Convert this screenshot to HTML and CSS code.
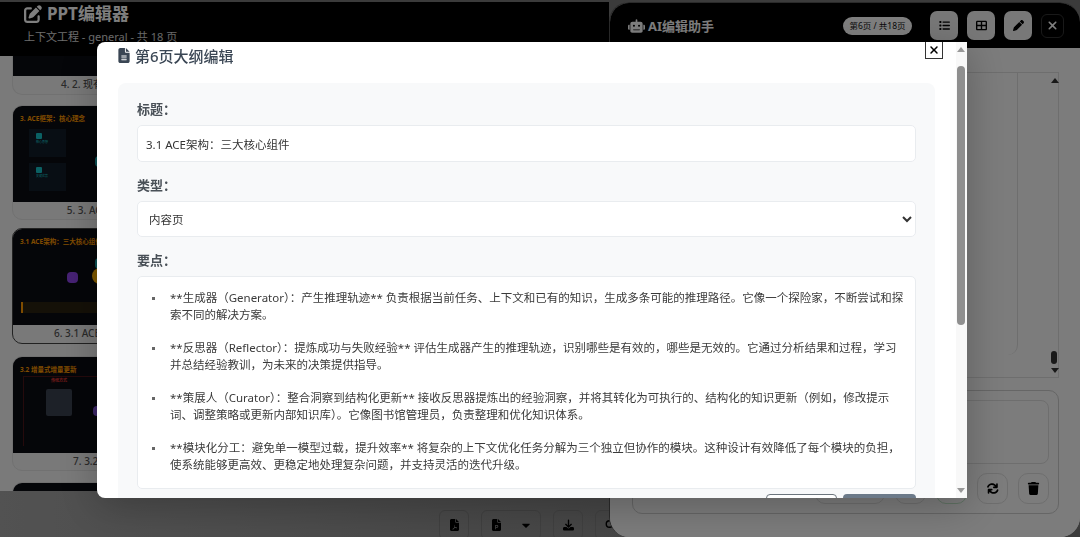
FILE: index.html
```html
<!DOCTYPE html>
<html lang="zh-CN">
<head>
  <meta charset="UTF-8">
  <meta name="viewport" content="width=device-width, initial-scale=1.0">
  <title>PPT编辑器</title>
  <link rel="stylesheet" href="styles.css">
</head>
<body>
  <div class="app">
    <div class="editor">
      <header class="editor-header">
        <h1 class="editor-title">
          <svg class="title-icon" viewBox="0 0 512 512"><path fill="currentColor" d="M471.6 21.7c-21.9-21.9-57.3-21.9-79.2 0L362.3 51.7l97.9 97.9 30.1-30.1c21.9-21.9 21.9-57.3 0-79.2L471.6 21.7zM172.4 241.7c-6.1 6.1-10.8 13.6-13.5 21.9l-29.6 88.8c-2.9 8.6-.6 18.1 5.8 24.6s15.9 8.7 24.6 5.8l88.8-29.6c8.2-2.7 15.7-7.4 21.9-13.5L437.7 172.3 339.7 74.3 172.4 241.7zM96 64C43 64 0 107 0 160V416c0 53 43 96 96 96H352c53 0 96-43 96-96V320c0-17.7-14.3-32-32-32s-32 14.3-32 32v96c0 17.7-14.3 32-32 32H96c-17.7 0-32-14.3-32-32V160c0-17.7 14.3-32 32-32h96c17.7 0 32-14.3 32-32s-14.3-32-32-32H96z"/></svg>
          PPT编辑器
        </h1>
        <p class="editor-sub">上下文工程 - general - 共 18 页</p>
      </header>

      <div class="slide-list">
        <div class="card card-first">
          <div class="slide slide-short"></div>
          <div class="caption">4. 2. 现有方法的局限与挑战</div>
        </div>
        <div class="card">
          <div class="slide">
            <div class="slide-head">3. ACE框架&#xFF1A;核心理念</div>
            <div class="mini-box"><span class="mini-icon"></span><span class="mini-label">核心思想</span></div>
            <div class="mini-box"><span class="mini-icon"></span><span class="mini-label">关键优势</span></div>
            <span class="dot dot-side"></span>
          </div>
          <div class="caption">5. 3. ACE框架&#xFF1A;核心理念</div>
        </div>
        <div class="card card-active">
          <div class="slide">
            <div class="slide-head">3.1 ACE架构&#xFF1A;三大核心组件</div>
            <span class="dot dot-teal"></span>
            <span class="dot dot-purple"></span>
            <span class="dot dot-gold"></span>
            <div class="slide-note"></div>
          </div>
          <div class="caption">6. 3.1 ACE架构&#xFF1A;三大核心组件</div>
        </div>
        <div class="card">
          <div class="slide">
            <div class="slide-head">3.2 增量式增量更新</div>
            <div class="red-frame">
              <span class="frame-label">传统方式</span>
              <span class="grey-box"></span>
            </div>
            <span class="dot dot-violet"></span>
          </div>
          <div class="caption">7. 3.2 增量式增量更新</div>
        </div>
        <div class="card">
          <div class="slide"></div>
        </div>
      </div>

      <div class="toolbar">
        <span class="tool">
          <svg viewBox="0 0 384 512"><path fill="currentColor" d="M64 0C29 0 0 29 0 64v384c0 35 29 64 64 64h256c35 0 64-29 64-64V160H256c-18 0-32-14-32-32V0H64zm192 0v128h128L256 0zM176 240c18 0 26 16 22 42-3 18-2 30 12 48 12 16 32 26 62 26 20 0 30 10 26 24-4 12-20 16-38 10-22-8-44-6-74 4-20 36-40 58-62 58-16 0-24-12-18-26 8-18 32-30 62-42 12-24 20-50 18-78-4-24-6-66-10-66z"/></svg>
        </span>
        <span class="tool tool-split">
          <span class="split-part">
            <svg viewBox="0 0 384 512"><path fill="currentColor" fill-rule="evenodd" d="M64 0C29 0 0 29 0 64v384c0 35 29 64 64 64h256c35 0 64-29 64-64V160H256c-18 0-32-14-32-32V0H64zm192 0v128h128L256 0zM136 260h72c36 0 60 24 60 58s-24 58-60 58h-40v60h-32V260zm32 32v52h36c16 0 28-10 28-26s-12-26-28-26h-36z"/></svg>
          </span>
          <span class="split-part">
            <svg class="caret" viewBox="0 0 320 512"><path fill="currentColor" d="M20 200h280c18 0 27 21 14 34L174 374c-8 8-20 8-28 0L6 234c-13-13-4-34 14-34z"/></svg>
          </span>
        </span>
        <span class="tool">
          <svg viewBox="0 0 512 512"><path fill="currentColor" d="M288 32c0-18-14-32-32-32s-32 14-32 32v242l-73-73c-12-12-33-12-45 0s-12 33 0 45l128 128c12 12 33 12 45 0l128-128c12-12 12-33 0-45s-33-12-45 0l-74 73V32zM64 352c-35 0-64 29-64 64v32c0 35 29 64 64 64h384c35 0 64-29 64-64v-32c0-35-29-64-64-64H347l-46 46c-25 25-65 25-90 0l-46-46H64z"/></svg>
        </span>
        <span class="tool">
          <svg viewBox="0 0 512 512"><circle cx="208" cy="208" r="150" fill="none" stroke="currentColor" stroke-width="64"/></svg>
        </span>
      </div>
    </div>

    <aside class="panel">
      <header class="panel-header">
        <h2 class="panel-title">
          <svg class="robot" viewBox="0 0 640 512"><path fill="currentColor" d="M320 0c18 0 32 14 32 32v64h120c44 0 80 36 80 80v272c0 35-29 64-64 64H152c-35 0-64-29-64-64V176c0-44 36-80 80-80h120V32c0-18 14-32 32-32zM208 384c-9 0-16 7-16 16s7 16 16 16h224c9 0 16-7 16-16s-7-16-16-16H208zm16-176a40 40 0 1 0 0 80 40 40 0 1 0 0-80zm192 0a40 40 0 1 0 0 80 40 40 0 1 0 0-80zM48 208h16v192H48c-27 0-48-21-48-48v-96c0-27 21-48 48-48zm544 0c27 0 48 21 48 48v96c0 27-21 48-48 48h-16V208h16z"/></svg>
          AI编辑助手
        </h2>
        <span class="page-badge">第6页 / 共18页</span>
        <span class="head-btn">
          <svg viewBox="0 0 512 512"><path fill="currentColor" d="M40 48C27 48 16 59 16 72v48c0 13 11 24 24 24h48c13 0 24-11 24-24V72c0-13-11-24-24-24H40zm152 16c-18 0-32 14-32 32s14 32 32 32h288c18 0 32-14 32-32s-14-32-32-32H192zm0 160c-18 0-32 14-32 32s14 32 32 32h288c18 0 32-14 32-32s-14-32-32-32H192zm0 160c-18 0-32 14-32 32s14 32 32 32h288c18 0 32-14 32-32s-14-32-32-32H192zM16 232v48c0 13 11 24 24 24h48c13 0 24-11 24-24v-48c0-13-11-24-24-24H40c-13 0-24 11-24 24zm24 136c-13 0-24 11-24 24v48c0 13 11 24 24 24h48c13 0 24-11 24-24v-48c0-13-11-24-24-24H40z"/></svg>
        </span>
        <span class="head-btn">
          <svg viewBox="0 0 512 512"><path fill="currentColor" d="M448 96v128H288V96h160zm0 192v128H288V288h160zM224 224H64V96h160v128zM64 288h160v128H64V288zM64 32C29 32 0 61 0 96v320c0 35 29 64 64 64h384c35 0 64-29 64-64V96c0-35-29-64-64-64H64z"/></svg>
        </span>
        <span class="head-btn">
          <svg viewBox="0 0 512 512"><path fill="currentColor" d="M362.7 19.3L314.3 67.7 444.3 197.7l48.4-48.4c25-25 25-65.5 0-90.5L453.3 19.3c-25-25-65.5-25-90.5 0zM291.7 90.3L58.6 323.5c-10.400 10.400-18 23.300-22.200 37.400L1 481.200c-2.500 8.500-.2 17.600 6 23.800s15.300 8.500 23.700 6.100l120.300-35.400c14.100-4.200 27-11.800 37.400-22.200L421.700 220.300 291.700 90.300z"/></svg>
        </span>
        <span class="head-close">
          <svg viewBox="0 0 384 512"><path fill="currentColor" d="M342.600 150.600c12.500-12.500 12.500-32.800 0-45.300s-32.800-12.500-45.300 0L192 210.700 86.600 105.400c-12.500-12.500-32.800-12.500-45.300 0s-12.500 32.800 0 45.300L146.700 256 41.400 361.400c-12.500 12.500-12.500 32.800 0 45.300s32.800 12.500 45.300 0L192 301.300l105.400 105.300c12.500 12.500 32.800 12.500 45.300 0s12.500-32.800 0-45.300L237.300 256l105.300-105.400z"/></svg>
        </span>
      </header>

      <div class="panel-body">
        <div class="chat">
          <div class="chat-card"></div>
          <div class="chat-scroll">
            <span class="arrow-up"></span>
            <span class="chat-thumb"></span>
            <span class="arrow-down"></span>
          </div>
        </div>
        <div class="composer">
          <div class="composer-input"></div>
          <div class="composer-btns">
            <span class="round-btn round-wide"></span>
            <span class="round-btn"></span>
            <span class="round-btn round-green"></span>
            <span class="round-btn">
              <svg viewBox="0 0 512 512"><path fill="currentColor" d="M105 203c16-45 56-80 107-88 41-6 81 7 110 36l27 27h-45c-18 0-32 14-32 32s14 32 32 32h128c18 0 32-14 32-32V82c0-18-14-32-32-32s-32 14-32 32v48l-31-31C326 56 265 38 203 47 128 58 68 110 44 182c-6 17 3 35 20 41s35-3 41-20zM468 289c-17-6-35 3-41 20-16 45-56 80-107 88-41 6-81-7-110-36l-27-27h45c18 0 32-14 32-32s-14-32-32-32H100c-18 0-32 14-32 32v128c0 18 14 32 32 32s32-14 32-32v-48l31 31c43 43 104 61 166 52 75-11 135-63 159-135 6-17-3-35-20-41z"/></svg>
            </span>
            <span class="round-btn">
              <svg viewBox="0 0 448 512"><path fill="currentColor" d="M135 18L128 32H32C14 32 0 46 0 64s14 32 32 32h384c18 0 32-14 32-32s-14-32-32-32h-96l-7-14C307 7 296 0 284 0H164c-12 0-23 7-29 18zM416 128H32l21 339c2 25 23 45 48 45h246c25 0 46-20 48-45l21-339z"/></svg>
            </span>
          </div>
        </div>
      </div>
    </aside>
  </div>

  <div class="overlay">
    <div class="modal">
      <div class="modal-head">
        <h3 class="modal-title">
          <svg class="doc-icon" viewBox="0 0 384 512"><path fill="currentColor" d="M64 0C29 0 0 29 0 64v384c0 35 29 64 64 64h256c35 0 64-29 64-64V160H256c-18 0-32-14-32-32V0H64zm192 0v128h128L256 0zM112 256h160c9 0 16 7 16 16s-7 16-16 16H112c-9 0-16-7-16-16s7-16 16-16zm0 64h160c9 0 16 7 16 16s-7 16-16 16H112c-9 0-16-7-16-16s7-16 16-16zm0 64h160c9 0 16 7 16 16s-7 16-16 16H112c-9 0-16-7-16-16s7-16 16-16z"/></svg>
          第6页大纲编辑
        </h3>
        <button class="modal-close">
          <svg viewBox="0 0 384 512"><path fill="currentColor" d="M342.600 150.600c12.500-12.500 12.500-32.800 0-45.300s-32.800-12.500-45.300 0L192 210.700 86.600 105.400c-12.500-12.500-32.800-12.500-45.300 0s-12.500 32.800 0 45.300L146.700 256 41.400 361.400c-12.500 12.500-12.500 32.800 0 45.300s32.800 12.500 45.300 0L192 301.300l105.400 105.300c12.500 12.500 32.800 12.500 45.300 0s12.500-32.800 0-45.300L237.300 256l105.300-105.400z"/></svg>
        </button>
      </div>

      <div class="form-panel">
        <label class="field-label">标题&#xFF1A;</label>
        <input class="field-input" type="text" value="3.1 ACE架构&#xFF1A;三大核心组件">

        <label class="field-label">类型&#xFF1A;</label>
        <select class="field-input field-select">
          <option>内容页</option>
        </select>

        <label class="field-label">要点&#xFF1A;</label>
        <div class="points">
          <ul class="points-list">
            <li><span>**生成器&#xFF08;Generator&#xFF09;&#xFF1A;产生推理轨迹** 负责根据当前任务、上下文和已有的知识&#xFF0C;生成多条可能的推理路径。它像一个探险家&#xFF0C;不断尝试和探索不同的解决方案。</span></li>
            <li><span>**反思器&#xFF08;Reflector&#xFF09;&#xFF1A;提炼成功与失败经验** 评估生成器产生的推理轨迹&#xFF0C;识别哪些是有效的&#xFF0C;哪些是无效的。它通过分析结果和过程&#xFF0C;学习并总结经验教训&#xFF0C;为未来的决策提供指导。</span></li>
            <li><span>**策展人&#xFF08;Curator&#xFF09;&#xFF1A;整合洞察到结构化更新** 接收反思器提炼出的经验洞察&#xFF0C;并将其转化为可执行的、结构化的知识更新&#xFF08;例如&#xFF0C;修改提示词、调整策略或更新内部知识库&#xFF09;。它像图书馆管理员&#xFF0C;负责整理和优化知识体系。</span></li>
            <li><span>**模块化分工&#xFF1A;避免单一模型过载&#xFF0C;提升效率** 将复杂的上下文优化任务分解为三个独立但协作的模块。这种设计有效降低了每个模块的负担&#xFF0C;使系统能够更高效、更稳定地处理复杂问题&#xFF0C;并支持灵活的迭代升级。</span></li>
          </ul>
        </div>

        <div class="form-actions">
          <button class="btn-cancel" aria-label="取消"></button>
          <button class="btn-save" aria-label="保存"></button>
        </div>
      </div>

      <div class="modal-scroll">
        <span class="arrow-up"></span>
        <span class="modal-thumb"></span>
        <span class="arrow-down"></span>
      </div>
    </div>
  </div>
</body>
</html>
```

FILE: styles.css
```css
* {
  box-sizing: border-box;
}
html, body {
  height: 100%;
}
body {
  margin: 0;
  overflow: hidden;
  background-color: #777;
  font-family: "Noto Sans", "Noto Sans CJK SC", sans-serif;
}
.app {
  display: flex;
  height: 537px;
  padding-top: 2px;
  background-color: #777;
}

/* left editor */
.editor {
  flex: 1;
  min-width: 0;
  display: flex;
  flex-direction: column;
  background-color: #fff;
}
.editor-header {
  height: 54px;
  flex-shrink: 0;
  padding: 0 24px;
  background-color: #000;
  color: #fff;
}
.editor-title {
  display: flex;
  align-items: center;
  gap: 5px;
  margin: 0;
  font-size: 17px;
  line-height: 24px;
  font-weight: 700;
}
.title-icon {
  width: 18px;
  height: 18px;
}
.editor-sub {
  margin: 3px 0 0;
  font-size: 11px;
  line-height: 16px;
  opacity: .85;
}
.slide-list {
  flex: 1;
  min-height: 0;
  overflow: hidden;
  padding: 0 12px;
  background-color: #f5f5f5;
}
.card {
  width: 220px;
  height: 115px;
  margin-bottom: 11px;
  border: 1px solid #e2e2e2;
  border-radius: 10px;
  background-color: #f2f2f2;
  overflow: hidden;
}
.card-first {
  height: 39px;
  margin-bottom: 10px;
  border-top: 0;
  border-radius: 0 0 10px 10px;
}
.card-active {
  height: 116px;
  margin-top: -3px;
  margin-bottom: 12px;
  border-color: #444;
}
.slide {
  position: relative;
  height: 96px;
  padding: 9px 7px;
  background-color: #0a0c12;
}
.slide-short {
  height: 20px;
}
.slide-head {
  font-size: 6.500px;
  line-height: 8px;
  font-weight: 700;
  color: #ff9800;
}
.mini-box {
  width: 37px;
  height: 28px;
  margin: 6px 0 3px 9px;
  padding: 4px 7px;
  background-color: #111c28;
}
.mini-icon {
  display: block;
  width: 6px;
  height: 6px;
  border-radius: 1px;
  background-color: #17c3c9;
}
.mini-label {
  display: block;
  font-size: 3px;
  line-height: 6px;
  color: #17c3c9;
}
.dot {
  position: absolute;
  border-radius: 4px;
}
.dot-side {
  left: 82px;
  top: 50px;
  width: 12px;
  height: 11px;
  background-color: #17a5ab;
}
.dot-teal {
  left: 82px;
  top: 29px;
  width: 14px;
  height: 11px;
  background-color: #17a5ab;
}
.dot-purple {
  left: 54px;
  top: 43px;
  width: 11px;
  height: 11px;
  background-color: #8e44e8;
}
.dot-gold {
  left: 79px;
  top: 39px;
  width: 16px;
  height: 16px;
  border-radius: 50%;
  background-color: #ffb300;
}
.dot-violet {
  left: 80px;
  top: 49px;
  width: 9px;
  height: 10px;
  background-color: #7a4fd0;
}
.slide-note {
  position: absolute;
  left: 8px;
  right: 0;
  top: 73px;
  height: 11px;
  border-left: 2px solid #ff9800;
  background-color: #2a2210;
}
.red-frame {
  display: block;
  height: 70px;
  margin: 2px 0 0 3px;
  padding: 1px 0 0 22px;
  border: 1px solid #4a1418;
  border-width: 1px 0 0 1px;
}
.frame-label {
  display: block;
  width: 26px;
  height: 10px;
  text-align: center;
  font-size: 4px;
  line-height: 6px;
  font-weight: 700;
  color: #e53935;
}
.grey-box {
  display: block;
  width: 26px;
  height: 27px;
  margin-top: 1px;
  border-radius: 2px;
  background-color: #3a4250;
}
.caption {
  height: 17px;
  text-align: center;
  font-size: 10px;
  line-height: 17px;
  font-weight: 500;
  color: #555;
  white-space: nowrap;
}
.toolbar {
  height: 46px;
  flex-shrink: 0;
  display: flex;
  justify-content: flex-end;
  align-items: flex-start;
  gap: 12px;
  padding-top: 19px;
  margin-right: -16px;
  background-image: linear-gradient(to right, #a4a4a4, #8c8c8c);
  color: #000;
}
.tool {
  display: flex;
  align-items: center;
  justify-content: center;
  width: 30px;
  height: 30px;
  border: 1px solid #808080;
  border-radius: 6px;
}
.tool svg {
  width: 11px;
  height: 12px;
}
.tool-split {
  width: 60px;
}
.split-part {
  flex: 1;
  display: flex;
  justify-content: center;
}
.split-part svg.caret {
  width: 8px;
}

/* right panel */
.panel {
  width: 471px;
  flex-shrink: 0;
  position: relative;
  display: flex;
  flex-direction: column;
  border-radius: 20px;
  border: 1px solid #555;
  border-width: 1px 0 0 1px;
  background-color: #fff;
  overflow: hidden;
}
.panel-header {
  height: 45px;
  flex-shrink: 0;
  display: flex;
  align-items: center;
  padding: 0 16px 0 18px;
  background-color: #000;
}
.panel-title {
  flex: 1;
  display: flex;
  align-items: center;
  gap: 3px;
  margin: 0;
  font-size: 13px;
  font-weight: 700;
  color: #fff;
}
.robot {
  width: 17px;
  height: 14px;
}
.page-badge {
  width: 69px;
  height: 18px;
  margin-right: 18px;
  border-radius: 9px;
  text-align: center;
  font-size: 8.500px;
  line-height: 18px;
  color: #111;
  background-color: #fff;
}
.head-btn {
  display: flex;
  align-items: center;
  justify-content: center;
  width: 28px;
  height: 29px;
  margin-right: 9px;
  border-radius: 7px;
  background-color: #f0f0f0;
  color: #000;
}
.head-btn svg {
  width: 11px;
  height: 11px;
}
.head-close {
  display: flex;
  align-items: center;
  justify-content: center;
  width: 23px;
  height: 24px;
  border: 1px solid #333;
  border-radius: 6px;
  color: #fff;
}
.head-close svg {
  width: 11px;
  height: 13px;
}
.panel-body {
  flex: 1;
  min-height: 0;
  display: flex;
  flex-direction: column;
  padding: 24px 21px 23px 22px;
  background-color: #f8f8f8;
}
.chat {
  flex: 1;
  min-height: 0;
  display: flex;
  justify-content: flex-end;
  border: 1px solid #ddd;
  border-width: 1px 1px 1px 0;
}
.chat-card {
  width: 60px;
  height: 282px;
  margin-right: 33px;
  border-right: 1px solid #ddd;
  border-radius: 0 0 10px 0;
}
.chat-scroll {
  position: relative;
  width: 7px;
}
.chat-thumb {
  position: absolute;
  left: 0;
  top: 278px;
  width: 6px;
  height: 13px;
  border-radius: 3px;
  background-color: #333;
}
.chat-scroll .arrow-up {
  position: absolute;
  top: 5px;
  left: 0;
}
.chat-scroll .arrow-down {
  position: absolute;
  top: 295px;
  left: 0;
}
.composer {
  height: 124px;
  flex-shrink: 0;
  margin-top: 12px;
  padding: 9px;
  border: 1px solid #ccc;
  border-radius: 10px;
}
.composer-input {
  height: 64px;
  border: 1px solid #ddd;
  border-radius: 8px;
}
.composer-btns {
  display: flex;
  justify-content: flex-end;
  gap: 10px;
  margin-top: 9px;
}
.round-btn {
  display: flex;
  align-items: center;
  justify-content: center;
  width: 31px;
  height: 31px;
  border: 1px solid #ddd;
  border-radius: 10px;
  color: #000;
}
.round-btn svg {
  width: 13px;
  height: 13px;
}
.round-wide {
  width: 70px;
}
.round-green {
  border-color: #bfe3c6;
}

/* modal */
.overlay {
  position: fixed;
  top: 0;
  left: 0;
  right: 0;
  bottom: 0;
  background-color: rgba(0, 0, 0, .5);
}
.modal {
  position: relative;
  width: 870px;
  height: 456px;
  margin: 42px 0 0 97px;
  padding: 0 32px 0 21px;
  border-radius: 8px 0 0 8px;
  background-color: #fff;
  box-shadow: 0 8px 40px rgba(0, 0, 0, .25);
  overflow: hidden;
}
.modal-head {
  display: flex;
  justify-content: space-between;
  height: 41px;
}
.modal-title {
  display: flex;
  align-items: center;
  gap: 5px;
  height: 27px;
  margin: 0;
  font-size: 15px;
  font-weight: 500;
  color: #3a4654;
}
.doc-icon {
  width: 12px;
  height: 15px;
}
.modal-close {
  display: flex;
  align-items: center;
  justify-content: center;
  width: 18px;
  height: 17px;
  margin-right: -8px;
  padding: 0;
  border: 1px solid #333;
  border-width: 0 1px 1px 1px;
  background-color: #fff;
  color: #000;
}
.modal-close svg {
  width: 10px;
  height: 12px;
}
.form-panel {
  padding: 17px 19px 20px;
  border-radius: 8px;
  background-color: #f8f9fa;
}
.field-label {
  display: block;
  margin-bottom: 6px;
  font-size: 13px;
  line-height: 19px;
  font-weight: 600;
  color: #495057;
}
.field-input {
  display: block;
  width: 100%;
  height: 37px;
  margin-bottom: 14px;
  padding: 0 8px;
  border: 1px solid #e9ecef;
  border-radius: 5px;
  background-color: #fff;
  font-family: "Noto Sans", "Noto Sans CJK SC", sans-serif;
  font-size: 11.500px;
  color: #333;
}
.field-select {
  height: 36px;
  padding: 0 7px;
}
.points {
  height: 213px;
  padding: 12px 9px 0 14px;
  border: 1px solid #e9ecef;
  border-radius: 5px;
  background-color: #fff;
}
.points-list {
  margin: 0;
  padding: 0;
  list-style: none;
  font-size: 11.500px;
  line-height: 17px;
  color: #3a3a3a;
}
.points-list li {
  display: flex;
  margin-bottom: 16px;
}
.points-list li::before {
  content: "";
  flex-shrink: 0;
  width: 3px;
  height: 3px;
  margin: 8px 15px 0 0;
  background-color: #666;
}
.form-actions {
  display: flex;
  justify-content: flex-end;
  gap: 6px;
  margin-top: 5px;
}
.btn-cancel, .btn-save {
  height: 30px;
  border-radius: 4px;
}
.btn-cancel {
  width: 71px;
  border: 1px solid #6c757d;
  background-color: #fff;
}
.btn-save {
  width: 73px;
  border: 0;
  background-color: #6c7a89;
}
.modal-scroll {
  position: absolute;
  top: 0;
  right: 0;
  bottom: 0;
  width: 11px;
  background-color: #f8f8f8;
}
.modal-thumb {
  position: absolute;
  left: 1px;
  top: 24px;
  width: 8px;
  height: 259px;
  border-radius: 4px;
  background-color: #8f8f8f;
}
.modal-scroll .arrow-up {
  position: absolute;
  left: 1px;
  top: 5px;
}
.modal-scroll .arrow-down {
  position: absolute;
  left: 1px;
  bottom: 5px;
}
.arrow-up, .arrow-down {
  display: block;
  width: 0;
  height: 0;
  border-left: 4px solid transparent;
  border-right: 4px solid transparent;
}
.arrow-up {
  border-bottom: 5px solid #999;
}
.arrow-down {
  border-top: 5px solid #999;
}
.chat-scroll .arrow-up {
  border-bottom-color: #333;
}
.chat-scroll .arrow-down {
  border-top-color: #333;
}
```
